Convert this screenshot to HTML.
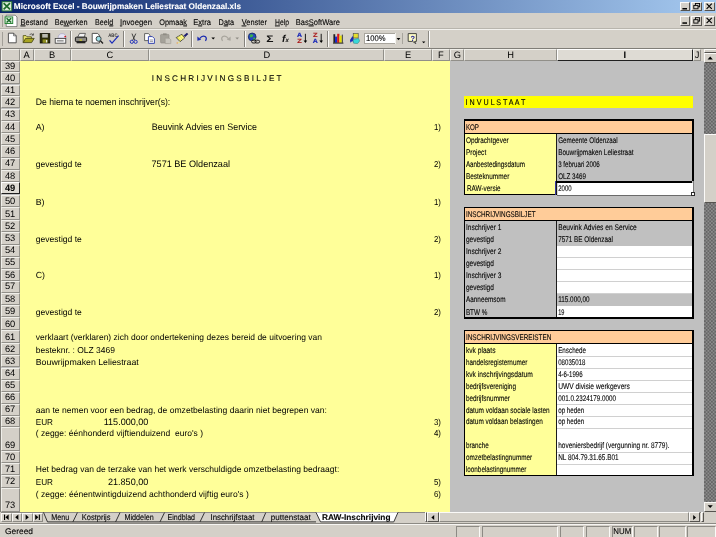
<!DOCTYPE html>
<html lang="nl"><head><meta charset="utf-8"><title>Microsoft Excel - Bouwrijpmaken Leliestraat Oldenzaal.xls</title>
<style>
html,body{margin:0;padding:0;}
body{width:716px;height:537px;overflow:hidden;background:#d4d0c8;font-family:"Liberation Sans",sans-serif;}
#app{filter:blur(0.3px);position:relative;width:716px;height:537px;overflow:hidden;background:#d4d0c8;}
#app div{position:absolute;box-sizing:border-box;}
#app svg{position:absolute;left:0;top:0;will-change:transform;}
.hd{background:#d4d0c8;border-top:1px solid #f0efea;border-left:1px solid #f0efea;border-bottom:1px solid #918f89;border-right:1px solid #918f89;}
.hdsel{background:#dedbd4;border-top:1px solid #fff;border-left:1px solid #fff;border-bottom:1px solid #202020;border-right:1px solid #202020;}
.btn{background:#d4d0c8;border-top:1px solid #fbfaf8;border-left:1px solid #fbfaf8;border-bottom:1px solid #55534f;border-right:1px solid #55534f;}
.btn2{background:#d4d0c8;border-top:1px solid #fbfaf8;border-left:1px solid #fbfaf8;border-bottom:1px solid #8c8a84;border-right:1px solid #8c8a84;}
.sunk{border-top:1px solid #8c8a84;border-left:1px solid #8c8a84;border-bottom:1px solid #fbfaf8;border-right:1px solid #fbfaf8;}
.chk{background:radial-gradient(circle at 25% 25%,#9c9c9c 0,#909090 0.55px,rgba(144,144,144,0) 1.2px),radial-gradient(circle at 75% 75%,#9c9c9c 0,#909090 0.55px,rgba(144,144,144,0) 1.2px),#656565;background-size:3.5px 3.5px;}
text{font-family:"Liberation Sans",sans-serif;white-space:pre;text-rendering:geometricPrecision;}
</style></head><body><div id="app">
<div id="titlebar" style="left:0;top:0;width:716px;height:12.6px;background:linear-gradient(90deg,#0a246a 0%,#a6caf0 100%);"></div>
<div style="left:0.00px;top:12.60px;width:716.00px;height:16.40px;background:#d4d0c8;border-bottom:1px solid #b8b5ad;"></div>
<div style="left:0.00px;top:29.00px;width:716.00px;height:19.00px;background:#d4d0c8;border-top:1px solid #f2f1ed;"></div>
<div class="btn" style="left:679.80px;top:1.70px;width:10.60px;height:9.00px;"></div>
<div class="btn" style="left:679.80px;top:16.00px;width:10.60px;height:9.60px;"></div>
<div class="btn" style="left:691.40px;top:1.70px;width:10.40px;height:9.00px;"></div>
<div class="btn" style="left:691.40px;top:16.00px;width:10.40px;height:9.60px;"></div>
<div class="btn" style="left:703.70px;top:1.70px;width:11.00px;height:9.00px;"></div>
<div class="btn" style="left:703.70px;top:16.00px;width:11.00px;height:9.60px;"></div>
<div style="left:1.80px;top:15.00px;width:1.60px;height:12.00px;background:#f4f3ef;border-right:0.8px solid #a29f98;"></div>
<div style="left:1.80px;top:31.50px;width:1.60px;height:14.50px;background:#f4f3ef;border-right:0.8px solid #a29f98;"></div>
<div style="left:428.20px;top:30.50px;width:1.50px;height:16.50px;background:#8c8a84;border-right:1px solid #fff;"></div>
<div style="left:70.00px;top:30.60px;width:2.00px;height:16.00px;background:#85827c;border-right:1px solid #fbfaf8;"></div>
<div style="left:123.00px;top:30.60px;width:2.00px;height:16.00px;background:#85827c;border-right:1px solid #fbfaf8;"></div>
<div style="left:191.00px;top:30.60px;width:2.00px;height:16.00px;background:#85827c;border-right:1px solid #fbfaf8;"></div>
<div style="left:244.00px;top:30.60px;width:2.00px;height:16.00px;background:#85827c;border-right:1px solid #fbfaf8;"></div>
<div style="left:327.00px;top:30.60px;width:2.00px;height:16.00px;background:#85827c;border-right:1px solid #fbfaf8;"></div>
<div style="left:363.50px;top:32.60px;width:39.50px;height:11.80px;background:#fff;border:1px solid #a8a59d;"></div>
<div style="left:394.60px;top:33.40px;width:7.80px;height:10.20px;background:#d4d0c8;border-left:1px solid #f4f3ef;"></div>
<div style="left:0.00px;top:47.60px;width:716.00px;height:1.20px;background:#807e78;"></div>
<div style="left:0.00px;top:48.80px;width:1.20px;height:474.20px;background:#807e78;"></div>
<div style="left:1.20px;top:60.50px;width:702.50px;height:451.50px;background:#c0c0c0;"></div>
<div style="left:19.60px;top:60.50px;width:430.70px;height:451.50px;background:#ffff99;"></div>
<div class="hd" style="left:1.20px;top:48.80px;width:18.40px;height:11.80px;"></div>
<div class="hd" style="left:19.60px;top:48.80px;width:14.00px;height:11.80px;"></div>
<div class="hd" style="left:33.60px;top:48.80px;width:37.00px;height:11.80px;"></div>
<div class="hd" style="left:70.60px;top:48.80px;width:78.70px;height:11.80px;"></div>
<div class="hd" style="left:149.30px;top:48.80px;width:235.10px;height:11.80px;"></div>
<div class="hd" style="left:384.40px;top:48.80px;width:47.20px;height:11.80px;"></div>
<div class="hd" style="left:431.60px;top:48.80px;width:18.60px;height:11.80px;"></div>
<div class="hd" style="left:450.20px;top:48.80px;width:14.20px;height:11.80px;"></div>
<div class="hd" style="left:464.40px;top:48.80px;width:92.20px;height:11.80px;"></div>
<div class="hdsel" style="left:556.60px;top:48.80px;width:136.50px;height:11.80px;"></div>
<div class="hd" style="left:693.10px;top:48.80px;width:7.90px;height:11.80px;"></div>
<div style="left:701.00px;top:48.80px;width:2.70px;height:11.80px;background:#d4d0c8;"></div>
<div class="hd" style="left:1.20px;top:60.70px;width:18.40px;height:11.70px;"></div>
<div class="hd" style="left:1.20px;top:72.40px;width:18.40px;height:12.10px;"></div>
<div class="hd" style="left:1.20px;top:84.50px;width:18.40px;height:11.90px;"></div>
<div class="hd" style="left:1.20px;top:96.40px;width:18.40px;height:12.10px;"></div>
<div class="hd" style="left:1.20px;top:108.50px;width:18.40px;height:12.50px;"></div>
<div class="hd" style="left:1.20px;top:121.00px;width:18.40px;height:12.40px;"></div>
<div class="hd" style="left:1.20px;top:133.40px;width:18.40px;height:12.00px;"></div>
<div class="hd" style="left:1.20px;top:145.40px;width:18.40px;height:12.20px;"></div>
<div class="hd" style="left:1.20px;top:157.60px;width:18.40px;height:12.40px;"></div>
<div class="hd" style="left:1.20px;top:170.00px;width:18.40px;height:12.20px;"></div>
<div class="hdsel" style="left:1.20px;top:182.20px;width:19.00px;height:12.30px;"></div>
<div class="hd" style="left:1.20px;top:194.50px;width:18.40px;height:12.90px;"></div>
<div class="hd" style="left:1.20px;top:207.40px;width:18.40px;height:12.70px;"></div>
<div class="hd" style="left:1.20px;top:220.10px;width:18.40px;height:12.30px;"></div>
<div class="hd" style="left:1.20px;top:232.40px;width:18.40px;height:12.30px;"></div>
<div class="hd" style="left:1.20px;top:244.70px;width:18.40px;height:12.00px;"></div>
<div class="hd" style="left:1.20px;top:256.70px;width:18.40px;height:12.20px;"></div>
<div class="hd" style="left:1.20px;top:268.90px;width:18.40px;height:12.20px;"></div>
<div class="hd" style="left:1.20px;top:281.10px;width:18.40px;height:11.90px;"></div>
<div class="hd" style="left:1.20px;top:293.00px;width:18.40px;height:12.20px;"></div>
<div class="hd" style="left:1.20px;top:305.20px;width:18.40px;height:12.20px;"></div>
<div class="hd" style="left:1.20px;top:317.40px;width:18.40px;height:12.70px;"></div>
<div class="hd" style="left:1.20px;top:330.10px;width:18.40px;height:13.00px;"></div>
<div class="hd" style="left:1.20px;top:343.10px;width:18.40px;height:12.20px;"></div>
<div class="hd" style="left:1.20px;top:355.30px;width:18.40px;height:12.20px;"></div>
<div class="hd" style="left:1.20px;top:367.50px;width:18.40px;height:12.20px;"></div>
<div class="hd" style="left:1.20px;top:379.70px;width:18.40px;height:12.00px;"></div>
<div class="hd" style="left:1.20px;top:391.70px;width:18.40px;height:12.00px;"></div>
<div class="hd" style="left:1.20px;top:403.70px;width:18.40px;height:12.10px;"></div>
<div class="hd" style="left:1.20px;top:415.80px;width:18.40px;height:11.60px;"></div>
<div class="hd" style="left:1.20px;top:427.40px;width:18.40px;height:23.80px;"></div>
<div class="hd" style="left:1.20px;top:451.20px;width:18.40px;height:12.00px;"></div>
<div class="hd" style="left:1.20px;top:463.20px;width:18.40px;height:12.20px;"></div>
<div class="hd" style="left:1.20px;top:475.40px;width:18.40px;height:12.60px;"></div>
<div class="hd" style="left:1.20px;top:488.00px;width:18.40px;height:23.80px;"></div>
<div style="left:464.20px;top:96.00px;width:229.00px;height:11.80px;background:#ffff00;"></div>
<div style="left:464.00px;top:119.20px;width:229.60px;height:75.70px;background:#000;"></div>
<div style="left:465.40px;top:120.80px;width:226.80px;height:12.30px;background:#ffcc99;"></div>
<div style="left:465.40px;top:134.10px;width:90.80px;height:60.30px;background:#ffff99;"></div>
<div style="left:556.00px;top:134.10px;width:1.10px;height:60.30px;background:#1c1c1c;"></div>
<div style="left:557.10px;top:134.10px;width:135.10px;height:60.30px;background:#fff;"></div>
<div style="left:557.10px;top:134.20px;width:135.10px;height:12.80px;background:#c0c0c0;"></div>
<div style="left:557.10px;top:146.30px;width:135.10px;height:12.90px;background:#c0c0c0;"></div>
<div style="left:557.10px;top:158.50px;width:135.10px;height:13.10px;background:#c0c0c0;"></div>
<div style="left:557.10px;top:170.90px;width:135.10px;height:12.20px;background:#c0c0c0;"></div>
<div style="left:556.50px;top:181.20px;width:138.50px;height:15.40px;background:#c0c0c0;"></div>
<div style="left:556.60px;top:183.00px;width:136.80px;height:11.60px;background:#fff;"></div>
<div style="left:556.40px;top:181.30px;width:135.50px;height:1.70px;background:#000;"></div>
<div style="left:555.10px;top:181.40px;width:1.40px;height:13.40px;background:#3a3aa0;"></div>
<div style="left:556.50px;top:183.00px;width:0.90px;height:11.60px;background:#d8d8d8;"></div>
<div style="left:693.40px;top:181.20px;width:0.90px;height:11.00px;background:#7c7c7c;"></div>
<div style="left:556.60px;top:194.60px;width:134.60px;height:0.80px;background:#6a6a6a;"></div>
<div style="left:690.90px;top:192.00px;width:3.90px;height:4.30px;background:#2a2a2a;"></div>
<div style="left:692.10px;top:193.20px;width:1.50px;height:1.90px;background:#fff;"></div>
<div style="left:464.00px;top:207.00px;width:229.60px;height:111.50px;background:#000;"></div>
<div style="left:465.40px;top:208.20px;width:226.80px;height:11.70px;background:#ffcc99;"></div>
<div style="left:465.40px;top:220.90px;width:90.80px;height:96.40px;background:#c0c0c0;"></div>
<div style="left:556.00px;top:220.90px;width:1.10px;height:96.40px;background:#1c1c1c;"></div>
<div style="left:557.10px;top:220.90px;width:135.10px;height:96.40px;background:#fff;"></div>
<div style="left:557.10px;top:220.90px;width:135.10px;height:13.10px;background:#c0c0c0;"></div>
<div style="left:557.10px;top:233.30px;width:135.10px;height:12.50px;background:#c0c0c0;"></div>
<div style="left:557.10px;top:257.00px;width:135.10px;height:1.00px;background:#d0d0d0;"></div>
<div style="left:557.10px;top:269.20px;width:135.10px;height:1.00px;background:#d0d0d0;"></div>
<div style="left:557.10px;top:281.40px;width:135.10px;height:1.00px;background:#d0d0d0;"></div>
<div style="left:557.10px;top:293.30px;width:135.10px;height:1.00px;background:#d0d0d0;"></div>
<div style="left:557.10px;top:293.90px;width:135.10px;height:12.20px;background:#c0c0c0;"></div>
<div style="left:464.00px;top:330.00px;width:229.60px;height:146.20px;background:#000;"></div>
<div style="left:465.40px;top:331.20px;width:226.80px;height:11.70px;background:#ffcc99;"></div>
<div style="left:465.40px;top:343.90px;width:90.80px;height:131.10px;background:#ffff99;"></div>
<div style="left:556.00px;top:343.90px;width:1.10px;height:131.10px;background:#1c1c1c;"></div>
<div style="left:557.10px;top:343.90px;width:135.10px;height:131.10px;background:#fff;"></div>
<div style="left:557.10px;top:355.60px;width:135.10px;height:1.00px;background:#d0d0d0;"></div>
<div style="left:557.10px;top:367.80px;width:135.10px;height:1.00px;background:#d0d0d0;"></div>
<div style="left:557.10px;top:380.00px;width:135.10px;height:1.00px;background:#d0d0d0;"></div>
<div style="left:557.10px;top:392.00px;width:135.10px;height:1.00px;background:#d0d0d0;"></div>
<div style="left:557.10px;top:404.00px;width:135.10px;height:1.00px;background:#d0d0d0;"></div>
<div style="left:557.10px;top:416.10px;width:135.10px;height:1.00px;background:#d0d0d0;"></div>
<div style="left:557.10px;top:427.70px;width:135.10px;height:1.00px;background:#d0d0d0;"></div>
<div style="left:557.10px;top:451.50px;width:135.10px;height:1.00px;background:#d0d0d0;"></div>
<div style="left:557.10px;top:463.50px;width:135.10px;height:1.00px;background:#d0d0d0;"></div>
<div class="chk" style="left:703.70px;top:48.80px;width:12.30px;height:463.20px;"></div>
<div style="left:703.70px;top:48.80px;width:12.30px;height:0.80px;background:#d4d0c8;"></div>
<div class="btn" style="left:704.20px;top:49.40px;width:13.30px;height:3.50px;"></div>
<div class="btn" style="left:704.20px;top:52.90px;width:13.30px;height:10.00px;"></div>
<div class="btn" style="left:704.20px;top:134.30px;width:13.30px;height:69.00px;"></div>
<div class="btn" style="left:704.20px;top:501.60px;width:13.30px;height:10.00px;"></div>
<div style="left:0.00px;top:511.90px;width:716.00px;height:10.70px;background:#d4d0c8;"></div>
<div style="left:1.20px;top:511.90px;width:714.80px;height:0.70px;background:#8c8a84;"></div>
<div class="btn2" style="left:1.30px;top:512.60px;width:10.48px;height:9.40px;"></div>
<div class="btn2" style="left:11.78px;top:512.60px;width:10.48px;height:9.40px;"></div>
<div class="btn2" style="left:22.26px;top:512.60px;width:10.48px;height:9.40px;"></div>
<div class="btn2" style="left:32.74px;top:512.60px;width:10.48px;height:9.40px;"></div>
<div class="btn" style="left:424.80px;top:512.40px;width:2.60px;height:10.00px;"></div>
<div class="btn" style="left:427.40px;top:512.40px;width:11.20px;height:10.00px;"></div>
<div class="btn2" style="left:438.60px;top:512.40px;width:250.10px;height:10.00px;"></div>
<div class="btn" style="left:688.70px;top:512.40px;width:11.60px;height:10.00px;"></div>
<div class="btn" style="left:700.60px;top:512.40px;width:3.20px;height:10.00px;"></div>
<div style="left:703.80px;top:511.90px;width:12.20px;height:10.70px;background:#d4d0c8;"></div>
<div style="left:0.00px;top:522.60px;width:716.00px;height:14.40px;background:#d4d0c8;border-top:1px solid #8c8a84;"></div>
<div style="left:0.00px;top:523.60px;width:716.00px;height:0.80px;background:#f6f5f2;"></div>
<div class="sunk" style="left:456.40px;top:526.00px;width:23.80px;height:11.60px;"></div>
<div class="sunk" style="left:482.00px;top:526.00px;width:75.80px;height:11.60px;"></div>
<div class="sunk" style="left:559.60px;top:526.00px;width:24.60px;height:11.60px;"></div>
<div class="sunk" style="left:586.00px;top:526.00px;width:24.20px;height:11.60px;"></div>
<div class="sunk" style="left:611.90px;top:526.00px;width:20.70px;height:11.60px;"></div>
<div class="sunk" style="left:634.20px;top:526.00px;width:23.60px;height:11.60px;"></div>
<div class="sunk" style="left:659.40px;top:526.00px;width:26.40px;height:11.60px;"></div>
<div class="sunk" style="left:687.40px;top:526.00px;width:29.10px;height:11.60px;"></div>
<svg width="716" height="537" viewBox="0 0 716 537">
<g><rect x="1.6" y="1.2" width="10.6" height="10.2" fill="#2f7a3a"/><rect x="2.6" y="2.2" width="8.6" height="8.2" fill="#dfeedd"/><path d="M3.6 3.2 L10 9.4 M10 3.2 L3.6 9.4" stroke="#1d6a2a" stroke-width="1.7" fill="none"/></g>
<g><path d="M6.2 15.2 H15.2 L17 17 V26.6 H6.2 Z" fill="#fff" stroke="#6a6a6a" stroke-width="0.8"/><rect x="4.6" y="16.4" width="8.6" height="7.6" fill="#2f8a3c"/><rect x="5.6" y="17.4" width="6.6" height="5.6" fill="#d8efd8"/><path d="M6.6 18.2 L11.2 22.4 M11.2 18.2 L6.6 22.4" stroke="#1d6a2a" stroke-width="1.4"/></g>
<rect x="682.4" y="8.0" width="4.6" height="1.5" fill="#000"/>
<g fill="none" stroke="#000" stroke-width="0.9"><rect x="695.4" y="3.4" width="4.2" height="3.4"/><rect x="693.8" y="5.4" width="4.2" height="3.4" fill="#d4d0c8"/></g>
<path d="M706.6 3.6 L711.8 8.8 M711.8 3.6 L706.6 8.8" stroke="#000" stroke-width="1.15"/>
<rect x="682.4" y="22.3" width="4.6" height="1.5" fill="#000"/>
<g fill="none" stroke="#000" stroke-width="0.9"><rect x="695.4" y="17.7" width="4.2" height="3.4"/><rect x="693.8" y="19.7" width="4.2" height="3.4" fill="#d4d0c8"/></g>
<path d="M706.6 17.9 L711.8 23.1 M711.8 17.9 L706.6 23.1" stroke="#000" stroke-width="1.15"/>
<path d="M8.4 33.2 H13.6 L16.2 35.8 V42.8 H8.4 Z" fill="#fff" stroke="#444" stroke-width="0.9"/><path d="M13.6 33.2 V35.8 H16.2" fill="none" stroke="#444" stroke-width="0.7"/>
<path d="M23.2 42.6 V35.6 H26 L27 36.8 H31.4 V38.4" fill="#e9e36a" stroke="#4a4a10" stroke-width="0.8"/><path d="M23.2 42.6 L25.6 38.4 H34.2 L31.6 42.6 Z" fill="#a8a422" stroke="#3d3d0c" stroke-width="0.8"/><path d="M29.6 34.6 Q31.6 33 33.2 34.8 M33.4 33.4 V35.2 H31.8" fill="none" stroke="#333" stroke-width="0.7"/>
<rect x="40.2" y="33.6" width="9.6" height="9.4" fill="#2c2c0c" stroke="#0a0a02" stroke-width="0.8"/><rect x="42.2" y="34" width="5.6" height="3.6" fill="#b9b9b0"/><rect x="42.6" y="39.4" width="5" height="3.4" fill="#8f8f20"/><rect x="46" y="40" width="1.2" height="2.4" fill="#e8e8e0"/>
<path d="M58 38 Q58.5 33.6 62 33.6 Q66 33.6 66.2 38 Z" fill="#e8e6f6" stroke="#9a98b8" stroke-width="0.6"/><rect x="55.2" y="38.4" width="10.6" height="4.8" fill="#f4f4f4" stroke="#3a3a3a" stroke-width="0.8"/><rect x="57" y="40" width="6.6" height="1.6" fill="#9a9a9a"/><circle cx="65.2" cy="36.6" r="0.9" fill="#d01818"/>
<path d="M77.6 37.2 L79.6 33.4 H85.4 L84.2 37.2 Z" fill="#f2f2f2" stroke="#333" stroke-width="0.7"/><rect x="75.4" y="37.2" width="11.2" height="4.4" rx="0.8" fill="#8d8a84" stroke="#111" stroke-width="0.9"/><rect x="76.6" y="41.4" width="8.8" height="1.9" fill="#222" /><rect x="79.6" y="39.6" width="2.4" height="0.9" fill="#e6e200"/>
<path d="M92.2 33.4 H97.6 L99.4 35.2 V43 H92.2 Z" fill="#fff" stroke="#444" stroke-width="0.9"/><circle cx="98.6" cy="38.8" r="2.5" fill="#9fe0e8" stroke="#333" stroke-width="0.9"/><path d="M100.4 40.8 L103 43.6" stroke="#222" stroke-width="1.4"/>
<path d="M109.6 40.4 L112 43.2 L118.6 35.6" fill="none" stroke="#1a2ab8" stroke-width="1.2"/>
<path d="M132 33.6 L134.6 40 M135.8 33.6 L132.8 40" stroke="#333" stroke-width="0.9" fill="none"/><circle cx="131.8" cy="41.8" r="1.6" fill="none" stroke="#2434b8" stroke-width="1"/><circle cx="135.6" cy="41.8" r="1.6" fill="none" stroke="#2434b8" stroke-width="1"/>
<path d="M144.6 33.6 H148.4 L150 35.2 V40.6 H144.6 Z" fill="#fff" stroke="#444" stroke-width="0.8"/><path d="M148.4 36.6 H152.4 L154.4 38.6 V43.4 H148.4 Z" fill="#fff" stroke="#2434a8" stroke-width="0.9"/><path d="M149.8 40 H153 M149.8 41.6 H153" stroke="#556" stroke-width="0.6"/>
<rect x="160.6" y="34.4" width="8.4" height="8.6" rx="0.8" fill="#a5a29a" stroke="#8a877f" stroke-width="0.6"/><rect x="163" y="33.4" width="3.6" height="1.8" fill="#8f8c84"/><path d="M165.2 38.2 H169.2 L170.8 39.8 V43.6 H165.2 Z" fill="#c9c6be" stroke="#9c9991" stroke-width="0.6"/>
<path d="M184.0 35.6 L187.0 33.0 L187.9 34.2 L185.0 36.8 Z" fill="#1a1a7a" stroke="#101050" stroke-width="0.5"/><path d="M176.2 37.6 L181.9 34.3 L184.7 37.9 L180.1 41.6 Z" fill="#f4ee5a" stroke="#333" stroke-width="0.8"/><path d="M178.6 36.4 L182.2 40 M180.4 35.4 L183.6 38.8" stroke="#fff" stroke-width="0.5"/><circle cx="177.2" cy="43" r="0.7" fill="#f2a03a"/><circle cx="179.2" cy="42.4" r="0.6" fill="#f4ee5a"/>
<path d="M199.6 38.6 Q202.4 34.6 205.6 36.8 Q207.2 38.6 205.4 40.8" fill="none" stroke="#1c2cb0" stroke-width="1.2"/><path d="M197.4 36.6 L201.2 39.8 L197.4 40.8 Z" fill="#1c2cb0"/><path d="M211.4 37.6 H215 L213.2 39.6 Z" fill="#000"/>
<path d="M228.4 38.6 Q225.6 34.6 222.4 36.8 Q220.8 38.6 222.6 40.8" fill="none" stroke="#a9a69e" stroke-width="1.2"/><path d="M230.6 36.6 L226.8 39.8 L230.6 40.8 Z" fill="#a9a69e"/><path d="M235.4 37.6 H239 L237.2 39.6 Z" fill="#8e8b84"/>
<circle cx="252.2" cy="36.9" r="3.9" fill="#2446c0" stroke="#0c1c50" stroke-width="0.7"/><path d="M249.6 35 Q251.6 33.4 253.4 35.2 Q252.6 37.6 250.4 37.4 Z M253.2 37.8 Q255.4 37 255.6 39 Q254.6 40 253.2 39.4 Z" fill="#3ab04a"/><rect x="251.6" y="40.2" width="4.6" height="2.8" rx="1.4" fill="#d4d0c8" stroke="#111" stroke-width="0.9"/><rect x="255" y="40.2" width="4.6" height="2.8" rx="1.4" fill="none" stroke="#111" stroke-width="0.9"/>
<path d="M305.4 33.8 V41.4" stroke="#000" stroke-width="0.9"/><path d="M303.6 40.6 H307.2 L305.4 43 Z" fill="#000"/>
<path d="M321.2 33.8 V41.4" stroke="#000" stroke-width="0.9"/><path d="M319.4 40.6 H323 L321.2 43 Z" fill="#000"/>
<rect x="333.4" y="34.2" width="1.8" height="8.6" fill="#222"/><rect x="335" y="36.6" width="2.2" height="6.2" fill="#1a2ad0"/><rect x="337.2" y="33.8" width="2.2" height="9" fill="#d81818"/><rect x="339.4" y="35.6" width="2.4" height="7.2" fill="#e8e000"/><rect x="341.8" y="34.6" width="1.2" height="8.2" fill="#555"/><rect x="333" y="42.6" width="10.4" height="1" fill="#222"/>
<path d="M350 40 L352.4 36.2 L353.6 37 L353.6 42.6 L352.2 41 L350.4 42.8 Z" fill="#1a2ab8"/><rect x="353.2" y="33.6" width="5" height="4.4" fill="#e6e030" stroke="#444" stroke-width="0.6"/><path d="M353 39.6 L358.6 38.4 L359.6 41 L357.6 43.6 L353.6 43.2 Z" fill="#38d8d8" stroke="#2a7a7a" stroke-width="0.5"/>
<path d="M396.6 38 H400.4 L398.5 40.2 Z" fill="#000"/>
<path d="M408.2 33.6 H416.4 V41.4 H414.6 L415.8 43.6 L412.6 41.4 H408.2 Z" fill="#fdfbc6" stroke="#333" stroke-width="0.9"/>
<path d="M422 41.4 H425.4 L423.7 43.2 Z" fill="#000"/>
<path d="M707.6 59.4 H712.8 L710.2 56.6 Z" fill="#000"/>
<path d="M707.6 505.2 H712.8 L710.2 508 Z" fill="#000"/>
<path d="M434.2 515 V520 L431.4 517.5 Z" fill="#000"/>
<path d="M693.2 515 V520 L696 517.5 Z" fill="#000"/>
<path d="M8.6 514.6 V520 L5.4 517.3 Z" fill="#000"/><rect x="4" y="514.6" width="1.1" height="5.4" fill="#000"/>
<path d="M18.4 514.6 V520 L15.2 517.3 Z" fill="#000"/>
<path d="M25.6 514.6 V520 L28.8 517.3 Z" fill="#000"/>
<path d="M35.2 514.6 V520 L38.4 517.3 Z" fill="#000"/><rect x="38.8" y="514.6" width="1.1" height="5.4" fill="#000"/>
<path d="M316 512.4 L320.5 521.9 H393.75 L398 512.4 Z" fill="#fff"/>
<g fill="none" stroke="#222" stroke-width="0.9"><path d="M43.5 512.4 L47.5 521.9 H316"/><path d="M72.9 521.9 L77.4 512.6"/><path d="M115.6 521.9 L120 512.6"/><path d="M160 521.9 L164.5 512.6"/><path d="M200 521.9 L204.5 512.6"/><path d="M261.75 521.9 L265.75 512.6"/><path d="M316 512.4 L320.5 521.9 H393.75 L398 512.4"/></g>
<text x="13.80" y="9.40" font-size="8.2" font-weight="bold" fill="#fff" textLength="227.20" lengthAdjust="spacingAndGlyphs" stroke="#fff" stroke-width="0.1">Microsoft Excel - Bouwrijpmaken Leliestraat Oldenzaal.xls</text>
<text x="20.60" y="24.50" font-size="8.2" textLength="27.20" lengthAdjust="spacingAndGlyphs" stroke="#000" stroke-width="0.1"><tspan text-decoration="underline">B</tspan>estand</text>
<text x="54.80" y="24.50" font-size="8.2" textLength="32.70" lengthAdjust="spacingAndGlyphs" stroke="#000" stroke-width="0.1">Be<tspan text-decoration="underline">w</tspan>erken</text>
<text x="95.00" y="24.50" font-size="8.2" textLength="18.20" lengthAdjust="spacingAndGlyphs" stroke="#000" stroke-width="0.1">Beel<tspan text-decoration="underline">d</tspan></text>
<text x="120.00" y="24.50" font-size="8.2" textLength="32.00" lengthAdjust="spacingAndGlyphs" stroke="#000" stroke-width="0.1"><tspan text-decoration="underline">I</tspan>nvoegen</text>
<text x="159.30" y="24.50" font-size="8.2" textLength="27.70" lengthAdjust="spacingAndGlyphs" stroke="#000" stroke-width="0.1">Opmaa<tspan text-decoration="underline">k</tspan></text>
<text x="193.20" y="24.50" font-size="8.2" textLength="17.80" lengthAdjust="spacingAndGlyphs" stroke="#000" stroke-width="0.1">E<tspan text-decoration="underline">x</tspan>tra</text>
<text x="218.60" y="24.50" font-size="8.2" textLength="15.60" lengthAdjust="spacingAndGlyphs" stroke="#000" stroke-width="0.1">D<tspan text-decoration="underline">a</tspan>ta</text>
<text x="241.80" y="24.50" font-size="8.2" textLength="25.10" lengthAdjust="spacingAndGlyphs" stroke="#000" stroke-width="0.1"><tspan text-decoration="underline">V</tspan>enster</text>
<text x="275.00" y="24.50" font-size="8.2" textLength="14.00" lengthAdjust="spacingAndGlyphs" stroke="#000" stroke-width="0.1"><tspan text-decoration="underline">H</tspan>elp</text>
<text x="295.80" y="24.50" font-size="8.2" textLength="44.10" lengthAdjust="spacingAndGlyphs" stroke="#000" stroke-width="0.1">Bas<tspan text-decoration="underline">S</tspan>oftWare</text>
<text x="365.90" y="40.90" font-size="8.2" textLength="19.60" lengthAdjust="spacingAndGlyphs" stroke="#000" stroke-width="0.1">100%</text>
<text x="26.60" y="57.90" font-size="9.3" text-anchor="middle">A</text>
<text x="52.10" y="57.90" font-size="9.3" text-anchor="middle">B</text>
<text x="109.95" y="57.90" font-size="9.3" text-anchor="middle">C</text>
<text x="266.85" y="57.90" font-size="9.3" text-anchor="middle">D</text>
<text x="408.00" y="57.90" font-size="9.3" text-anchor="middle">E</text>
<text x="440.90" y="57.90" font-size="9.3" text-anchor="middle">F</text>
<text x="457.30" y="57.90" font-size="9.3" text-anchor="middle">G</text>
<text x="510.50" y="57.90" font-size="9.3" text-anchor="middle">H</text>
<text x="624.85" y="57.90" font-size="9.3" font-weight="bold" text-anchor="middle">I</text>
<text x="697.05" y="57.90" font-size="9.3" text-anchor="middle">J</text>
<text x="10.10" y="68.80" font-size="9.3" text-anchor="middle">39</text>
<text x="10.10" y="80.90" font-size="9.3" text-anchor="middle">40</text>
<text x="10.10" y="92.80" font-size="9.3" text-anchor="middle">41</text>
<text x="10.10" y="104.90" font-size="9.3" text-anchor="middle">42</text>
<text x="10.10" y="117.40" font-size="9.3" text-anchor="middle">43</text>
<text x="10.10" y="129.80" font-size="9.3" text-anchor="middle">44</text>
<text x="10.10" y="141.80" font-size="9.3" text-anchor="middle">45</text>
<text x="10.10" y="154.00" font-size="9.3" text-anchor="middle">46</text>
<text x="10.10" y="166.40" font-size="9.3" text-anchor="middle">47</text>
<text x="10.10" y="178.60" font-size="9.3" text-anchor="middle">48</text>
<text x="10.10" y="190.90" font-size="9.3" font-weight="bold" text-anchor="middle">49</text>
<text x="10.10" y="203.80" font-size="9.3" text-anchor="middle">50</text>
<text x="10.10" y="216.50" font-size="9.3" text-anchor="middle">51</text>
<text x="10.10" y="228.80" font-size="9.3" text-anchor="middle">52</text>
<text x="10.10" y="241.10" font-size="9.3" text-anchor="middle">53</text>
<text x="10.10" y="253.10" font-size="9.3" text-anchor="middle">54</text>
<text x="10.10" y="265.30" font-size="9.3" text-anchor="middle">55</text>
<text x="10.10" y="277.50" font-size="9.3" text-anchor="middle">56</text>
<text x="10.10" y="289.40" font-size="9.3" text-anchor="middle">57</text>
<text x="10.10" y="301.60" font-size="9.3" text-anchor="middle">58</text>
<text x="10.10" y="313.80" font-size="9.3" text-anchor="middle">59</text>
<text x="10.10" y="326.50" font-size="9.3" text-anchor="middle">60</text>
<text x="10.10" y="339.50" font-size="9.3" text-anchor="middle">61</text>
<text x="10.10" y="351.70" font-size="9.3" text-anchor="middle">62</text>
<text x="10.10" y="363.90" font-size="9.3" text-anchor="middle">63</text>
<text x="10.10" y="376.10" font-size="9.3" text-anchor="middle">64</text>
<text x="10.10" y="388.10" font-size="9.3" text-anchor="middle">65</text>
<text x="10.10" y="400.10" font-size="9.3" text-anchor="middle">66</text>
<text x="10.10" y="412.20" font-size="9.3" text-anchor="middle">67</text>
<text x="10.10" y="423.80" font-size="9.3" text-anchor="middle">68</text>
<text x="10.10" y="447.60" font-size="9.3" text-anchor="middle">69</text>
<text x="10.10" y="459.60" font-size="9.3" text-anchor="middle">70</text>
<text x="10.10" y="471.80" font-size="9.3" text-anchor="middle">71</text>
<text x="10.10" y="484.40" font-size="9.3" text-anchor="middle">72</text>
<text x="10.10" y="508.20" font-size="9.3" text-anchor="middle">73</text>
<text x="151.75" y="80.75" font-size="8.2" textLength="129.75" lengthAdjust="spacingAndGlyphs" stroke="#000" stroke-width="0.1">I N S C H R I J V I N G S B I L J E T</text>
<text x="35.75" y="105.00" font-size="9.4" textLength="134.50" lengthAdjust="spacingAndGlyphs">De hierna te noemen inschrijver(s):</text>
<text x="35.75" y="130.20" font-size="8.8">A)</text>
<text x="151.75" y="130.00" font-size="9.4" textLength="105.25" lengthAdjust="spacingAndGlyphs">Beuvink Advies en Service</text>
<text x="35.75" y="166.75" font-size="8.6" textLength="46.05" lengthAdjust="spacingAndGlyphs">gevestigd te</text>
<text x="151.50" y="166.75" font-size="9.4" textLength="78.50" lengthAdjust="spacingAndGlyphs">7571 BE Oldenzaal</text>
<text x="35.75" y="204.60" font-size="8.8">B)</text>
<text x="35.75" y="241.90" font-size="8.6" textLength="46.05" lengthAdjust="spacingAndGlyphs">gevestigd te</text>
<text x="35.75" y="278.30" font-size="8.8">C)</text>
<text x="35.75" y="314.60" font-size="8.6" textLength="46.05" lengthAdjust="spacingAndGlyphs">gevestigd te</text>
<text x="35.75" y="340.00" font-size="8.6" textLength="286.25" lengthAdjust="spacingAndGlyphs">verklaart (verklaren) zich door ondertekening dezes bereid de uitvoering van</text>
<text x="35.75" y="352.50" font-size="8.6" textLength="79.25" lengthAdjust="spacingAndGlyphs">besteknr. : OLZ 3469</text>
<text x="35.75" y="365.00" font-size="8.6" textLength="103.00" lengthAdjust="spacingAndGlyphs">Bouwrijpmaken Leliestraat</text>
<text x="35.75" y="412.50" font-size="8.6" textLength="291.25" lengthAdjust="spacingAndGlyphs">aan te nemen voor een bedrag, de omzetbelasting daarin niet begrepen van:</text>
<text x="35.75" y="424.50" font-size="8.6" textLength="17.25" lengthAdjust="spacingAndGlyphs">EUR</text>
<text x="103.75" y="424.50" font-size="9.4" textLength="44.50" lengthAdjust="spacingAndGlyphs">115.000,00</text>
<text x="35.75" y="435.75" font-size="8.6" textLength="167.25" lengthAdjust="spacingAndGlyphs">( zegge: éénhonderd vijftienduizend  euro's )</text>
<text x="35.75" y="472.00" font-size="8.6" textLength="303.50" lengthAdjust="spacingAndGlyphs">Het bedrag van de terzake van het werk verschuldigde omzetbelasting bedraagt:</text>
<text x="35.75" y="485.00" font-size="8.6" textLength="17.25" lengthAdjust="spacingAndGlyphs">EUR</text>
<text x="108.00" y="485.00" font-size="9.4" textLength="40.25" lengthAdjust="spacingAndGlyphs">21.850,00</text>
<text x="35.75" y="496.75" font-size="8.6" textLength="213.00" lengthAdjust="spacingAndGlyphs">( zegge: éénentwintigduizend achthonderd vijftig euro's )</text>
<text x="434.00" y="130.20" font-size="8.6" textLength="7.00" lengthAdjust="spacingAndGlyphs">1)</text>
<text x="434.00" y="166.90" font-size="8.6" textLength="7.00" lengthAdjust="spacingAndGlyphs">2)</text>
<text x="434.00" y="204.60" font-size="8.6" textLength="7.00" lengthAdjust="spacingAndGlyphs">1)</text>
<text x="434.00" y="241.90" font-size="8.6" textLength="7.00" lengthAdjust="spacingAndGlyphs">2)</text>
<text x="434.00" y="278.30" font-size="8.6" textLength="7.00" lengthAdjust="spacingAndGlyphs">1)</text>
<text x="434.00" y="314.60" font-size="8.6" textLength="7.00" lengthAdjust="spacingAndGlyphs">2)</text>
<text x="434.00" y="424.50" font-size="8.6" textLength="7.00" lengthAdjust="spacingAndGlyphs">3)</text>
<text x="434.00" y="435.90" font-size="8.6" textLength="7.00" lengthAdjust="spacingAndGlyphs">4)</text>
<text x="434.00" y="485.00" font-size="8.6" textLength="7.00" lengthAdjust="spacingAndGlyphs">5)</text>
<text x="434.00" y="496.50" font-size="8.6" textLength="7.00" lengthAdjust="spacingAndGlyphs">6)</text>
<text x="465.60" y="105.00" font-size="8.2" textLength="59.80" lengthAdjust="spacingAndGlyphs" stroke="#000" stroke-width="0.1">I N V U L S T A A T</text>
<text x="465.90" y="129.80" font-size="8.2" textLength="13.10" lengthAdjust="spacingAndGlyphs" stroke="#000" stroke-width="0.1">KOP</text>
<text x="465.90" y="143.00" font-size="8.2" textLength="42.80" lengthAdjust="spacingAndGlyphs" stroke="#000" stroke-width="0.1">Opdrachtgever</text>
<text x="558.20" y="143.00" font-size="8.2" textLength="59.50" lengthAdjust="spacingAndGlyphs" stroke="#000" stroke-width="0.1">Gemeente Oldenzaal</text>
<text x="465.90" y="154.50" font-size="8.2" textLength="20.30" lengthAdjust="spacingAndGlyphs" stroke="#000" stroke-width="0.1">Project</text>
<text x="558.20" y="154.50" font-size="8.2" textLength="75.30" lengthAdjust="spacingAndGlyphs" stroke="#000" stroke-width="0.1">Bouwrijpmaken Leliestraat</text>
<text x="465.90" y="166.80" font-size="8.2" textLength="59.10" lengthAdjust="spacingAndGlyphs" stroke="#000" stroke-width="0.1">Aanbestedingsdatum</text>
<text x="558.20" y="166.80" font-size="8.2" textLength="41.60" lengthAdjust="spacingAndGlyphs" stroke="#000" stroke-width="0.1">3 februari 2006</text>
<text x="465.90" y="178.70" font-size="8.2" textLength="43.40" lengthAdjust="spacingAndGlyphs" stroke="#000" stroke-width="0.1">Besteknummer</text>
<text x="558.20" y="178.70" font-size="8.2" textLength="27.80" lengthAdjust="spacingAndGlyphs" stroke="#000" stroke-width="0.1">OLZ 3469</text>
<text x="467.00" y="190.80" font-size="8.2" textLength="33.60" lengthAdjust="spacingAndGlyphs" stroke="#000" stroke-width="0.1">RAW-versie</text>
<text x="558.20" y="190.80" font-size="8.2" textLength="13.40" lengthAdjust="spacingAndGlyphs" stroke="#000" stroke-width="0.1">2000</text>
<text x="465.90" y="216.60" font-size="8.2" textLength="69.70" lengthAdjust="spacingAndGlyphs" stroke="#000" stroke-width="0.1">INSCHRIJVINGSBILJET</text>
<text x="465.90" y="229.80" font-size="8.2" textLength="35.50" lengthAdjust="spacingAndGlyphs" stroke="#000" stroke-width="0.1">Inschrijver 1</text>
<text x="558.20" y="229.80" font-size="8.2" textLength="78.60" lengthAdjust="spacingAndGlyphs" stroke="#000" stroke-width="0.1">Beuvink Advies en Service</text>
<text x="465.90" y="241.90" font-size="8.2" textLength="28.00" lengthAdjust="spacingAndGlyphs" stroke="#000" stroke-width="0.1">gevestigd</text>
<text x="558.20" y="241.90" font-size="8.2" textLength="54.70" lengthAdjust="spacingAndGlyphs" stroke="#000" stroke-width="0.1">7571 BE Oldenzaal</text>
<text x="465.90" y="253.60" font-size="8.2" textLength="35.50" lengthAdjust="spacingAndGlyphs" stroke="#000" stroke-width="0.1">Inschrijver 2</text>
<text x="465.90" y="265.70" font-size="8.2" textLength="28.00" lengthAdjust="spacingAndGlyphs" stroke="#000" stroke-width="0.1">gevestigd</text>
<text x="465.90" y="278.10" font-size="8.2" textLength="35.50" lengthAdjust="spacingAndGlyphs" stroke="#000" stroke-width="0.1">Inschrijver 3</text>
<text x="465.90" y="290.00" font-size="8.2" textLength="28.00" lengthAdjust="spacingAndGlyphs" stroke="#000" stroke-width="0.1">gevestigd</text>
<text x="465.90" y="302.00" font-size="8.2" textLength="39.60" lengthAdjust="spacingAndGlyphs" stroke="#000" stroke-width="0.1">Aanneemsom</text>
<text x="558.20" y="302.00" font-size="8.2" textLength="31.40" lengthAdjust="spacingAndGlyphs" stroke="#000" stroke-width="0.1">115.000,00</text>
<text x="465.90" y="314.60" font-size="8.2" textLength="21.50" lengthAdjust="spacingAndGlyphs" stroke="#000" stroke-width="0.1">BTW %</text>
<text x="558.20" y="314.60" font-size="8.2" textLength="6.20" lengthAdjust="spacingAndGlyphs" stroke="#000" stroke-width="0.1">19</text>
<text x="465.90" y="339.60" font-size="8.2" textLength="85.50" lengthAdjust="spacingAndGlyphs" stroke="#000" stroke-width="0.1">INSCHRIJVINGSVEREISTEN</text>
<text x="465.90" y="353.00" font-size="8.2" textLength="29.60" lengthAdjust="spacingAndGlyphs" stroke="#000" stroke-width="0.1">kvk plaats</text>
<text x="558.20" y="353.00" font-size="8.2" textLength="27.90" lengthAdjust="spacingAndGlyphs" stroke="#000" stroke-width="0.1">Enschede</text>
<text x="465.90" y="365.00" font-size="8.2" textLength="61.50" lengthAdjust="spacingAndGlyphs" stroke="#000" stroke-width="0.1">handelsregisternumer</text>
<text x="558.20" y="365.00" font-size="8.2" textLength="27.20" lengthAdjust="spacingAndGlyphs" stroke="#000" stroke-width="0.1">08035018</text>
<text x="465.90" y="377.00" font-size="8.2" textLength="66.90" lengthAdjust="spacingAndGlyphs" stroke="#000" stroke-width="0.1">kvk inschrijvingsdatum</text>
<text x="558.20" y="377.00" font-size="8.2" textLength="24.40" lengthAdjust="spacingAndGlyphs" stroke="#000" stroke-width="0.1">4-6-1996</text>
<text x="465.90" y="389.00" font-size="8.2" textLength="50.10" lengthAdjust="spacingAndGlyphs" stroke="#000" stroke-width="0.1">bedrijfsvereniging</text>
<text x="558.20" y="389.00" font-size="8.2" textLength="71.70" lengthAdjust="spacingAndGlyphs" stroke="#000" stroke-width="0.1">UWV divisie werkgevers</text>
<text x="465.90" y="401.00" font-size="8.2" textLength="44.10" lengthAdjust="spacingAndGlyphs" stroke="#000" stroke-width="0.1">bedrijfsnummer</text>
<text x="558.20" y="401.00" font-size="8.2" textLength="57.70" lengthAdjust="spacingAndGlyphs" stroke="#000" stroke-width="0.1">001.0.2324179.0000</text>
<text x="465.90" y="413.00" font-size="8.2" textLength="83.80" lengthAdjust="spacingAndGlyphs" stroke="#000" stroke-width="0.1">datum voldaan sociale lasten</text>
<text x="558.20" y="413.00" font-size="8.2" textLength="26.00" lengthAdjust="spacingAndGlyphs" stroke="#000" stroke-width="0.1">op heden</text>
<text x="465.90" y="424.00" font-size="8.2" textLength="76.90" lengthAdjust="spacingAndGlyphs" stroke="#000" stroke-width="0.1">datum voldaan belastingen</text>
<text x="558.20" y="424.00" font-size="8.2" textLength="26.00" lengthAdjust="spacingAndGlyphs" stroke="#000" stroke-width="0.1">op heden</text>
<text x="465.90" y="448.00" font-size="8.2" textLength="22.80" lengthAdjust="spacingAndGlyphs" stroke="#000" stroke-width="0.1">branche</text>
<text x="558.20" y="448.00" font-size="8.2" textLength="111.20" lengthAdjust="spacingAndGlyphs" stroke="#000" stroke-width="0.1">hoveniersbedrijf (vergunning nr. 8779).</text>
<text x="465.90" y="460.00" font-size="8.2" textLength="66.30" lengthAdjust="spacingAndGlyphs" stroke="#000" stroke-width="0.1">omzetbelastingnummer</text>
<text x="558.20" y="460.00" font-size="8.2" textLength="60.40" lengthAdjust="spacingAndGlyphs" stroke="#000" stroke-width="0.1">NL 804.79.31.65.B01</text>
<text x="465.90" y="472.00" font-size="8.2" textLength="60.50" lengthAdjust="spacingAndGlyphs" stroke="#000" stroke-width="0.1">loonbelastingnummer</text>
<text x="51.25" y="519.80" font-size="8.2" textLength="18.00" lengthAdjust="spacingAndGlyphs" stroke="#000" stroke-width="0.1">Menu</text>
<text x="81.75" y="519.80" font-size="8.2" textLength="28.75" lengthAdjust="spacingAndGlyphs" stroke="#000" stroke-width="0.1">Kostprijs</text>
<text x="124.50" y="519.80" font-size="8.2" textLength="29.25" lengthAdjust="spacingAndGlyphs" stroke="#000" stroke-width="0.1">Middelen</text>
<text x="167.50" y="519.80" font-size="8.2" textLength="27.50" lengthAdjust="spacingAndGlyphs" stroke="#000" stroke-width="0.1">Eindblad</text>
<text x="210.50" y="519.80" font-size="8.2" textLength="44.00" lengthAdjust="spacingAndGlyphs" stroke="#000" stroke-width="0.1">Inschrijfstaat</text>
<text x="270.75" y="519.80" font-size="8.2" textLength="40.00" lengthAdjust="spacingAndGlyphs" stroke="#000" stroke-width="0.1">puttenstaat</text>
<text x="322.00" y="519.80" font-size="8.2" font-weight="bold" textLength="68.50" lengthAdjust="spacingAndGlyphs" stroke="#000" stroke-width="0.1">RAW-Inschrijving</text>
<text x="5.00" y="533.60" font-size="8.2" textLength="28.00" lengthAdjust="spacingAndGlyphs" stroke="#000" stroke-width="0.1">Gereed</text>
<text x="613.30" y="533.60" font-size="8.2" textLength="17.90" lengthAdjust="spacingAndGlyphs" stroke="#000" stroke-width="0.1">NUM</text>
<text x="108.20" y="37.20" font-size="5.2" font-weight="bold" fill="#333" textLength="9.40" lengthAdjust="spacingAndGlyphs">ABC</text>
<text font-family="Liberation Serif, serif" x="266.20" y="41.90" font-size="9.4" font-weight="bold" fill="#111" textLength="7.20" lengthAdjust="spacingAndGlyphs">Σ</text>
<text font-style="italic" font-family="Liberation Serif, serif" x="282.00" y="42.20" font-size="10" font-weight="bold" fill="#111">f</text>
<text font-style="italic" font-family="Liberation Serif, serif" x="285.60" y="42.40" font-size="6" font-weight="bold" fill="#111">x</text>
<text x="297.00" y="37.00" font-size="6.2" font-weight="bold" fill="#1a2ab8" textLength="5.00" lengthAdjust="spacingAndGlyphs" stroke="#1a2ab8" stroke-width="0.2">A</text>
<text x="297.30" y="42.70" font-size="6.2" font-weight="bold" fill="#a81818" textLength="4.50" lengthAdjust="spacingAndGlyphs" stroke="#a81818" stroke-width="0.2">Z</text>
<text x="313.00" y="37.00" font-size="6.2" font-weight="bold" fill="#a81818" textLength="4.50" lengthAdjust="spacingAndGlyphs" stroke="#a81818" stroke-width="0.2">Z</text>
<text x="312.80" y="42.70" font-size="6.2" font-weight="bold" fill="#1a2ab8" textLength="5.00" lengthAdjust="spacingAndGlyphs" stroke="#1a2ab8" stroke-width="0.2">A</text>
<text x="410.60" y="40.60" font-size="7.4" font-weight="bold" fill="#1a1a9a">?</text>
</svg>
</div></body></html>
